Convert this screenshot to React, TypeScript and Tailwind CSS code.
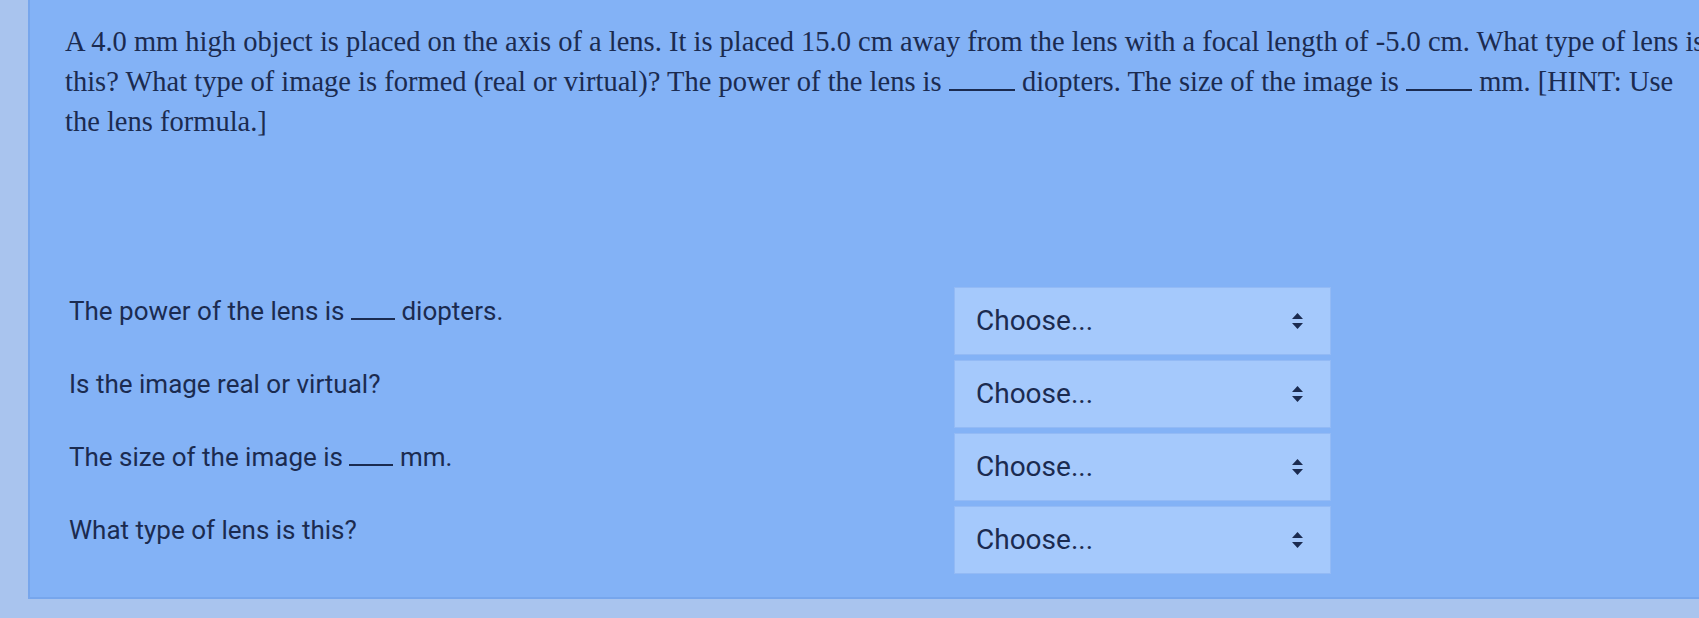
import React from "react";

const rows = [
  { label: "The power of the lens is", blank: true, unit: "diopters." },
  { label: "Is the image real or virtual?" },
  { label: "The size of the image is", blank: true, unit: "mm." },
  { label: "What type of lens is this?" },
];

function Blank({ w }: { w: string }) {
  return <span className={`inline-block ${w} border-b-2 border-[#1b2b50] align-baseline`} />;
}

function SortIcon() {
  return (
    <svg width="13" height="20" viewBox="0 0 13 20" className="fill-[#1b2b50]">
      <path d="M6.5 2 L12 8 H1 Z" />
      <path d="M6.5 18 L12 12 H1 Z" />
    </svg>
  );
}

function ChooseSelect() {
  return (
    <div className="flex h-[68px] w-[377px] items-center justify-between border border-[#93baf5] bg-[#a5c9fc] pl-[21px] pr-[26px]">
      <span className="text-[28px] text-[#1b2b50]">Choose...</span>
      <SortIcon />
    </div>
  );
}

export default function App() {
  return (
    <div className="h-[618px] w-[1699px] overflow-hidden bg-[#a9c4ee] font-['Roboto',sans-serif]">
      <div className="ml-[28px] flex h-[599px] w-[1720px] flex-col border-b-2 border-l-2 border-[#77a6ec] bg-[#83b2f6]">
        <div className="pl-[35px] pt-[22px] font-['Liberation_Serif',serif] text-[28.5px] leading-[40px] text-[#1b2b50]">
          <p className="whitespace-nowrap">
            A 4.0 mm high object is placed on the axis of a lens. It is placed 15.0 cm away from the lens with a focal length of -5.0 cm. What type of lens is
          </p>
          <p className="whitespace-nowrap">
            this? What type of image is formed (real or virtual)? The power of the lens is <Blank w="w-[66px]" /> diopters. The size of the image is{" "}
            <Blank w="w-[66px]" /> mm. [HINT: Use
          </p>
          <p className="whitespace-nowrap">the lens formula.]</p>
        </div>

        <div className="mt-[145px] flex flex-col gap-[5px] pl-[39px]">
          {rows.map((r) => (
            <div key={r.label} className="flex">
              <div className="w-[885px] pt-[5px] text-[26px] text-[#1b2b50]">
                {r.label}
                {r.blank && (
                  <>
                    {" "}
                    <Blank w="w-[44px]" /> {r.unit}
                  </>
                )}
              </div>
              <ChooseSelect />
            </div>
          ))}
        </div>
      </div>
    </div>
  );
}
